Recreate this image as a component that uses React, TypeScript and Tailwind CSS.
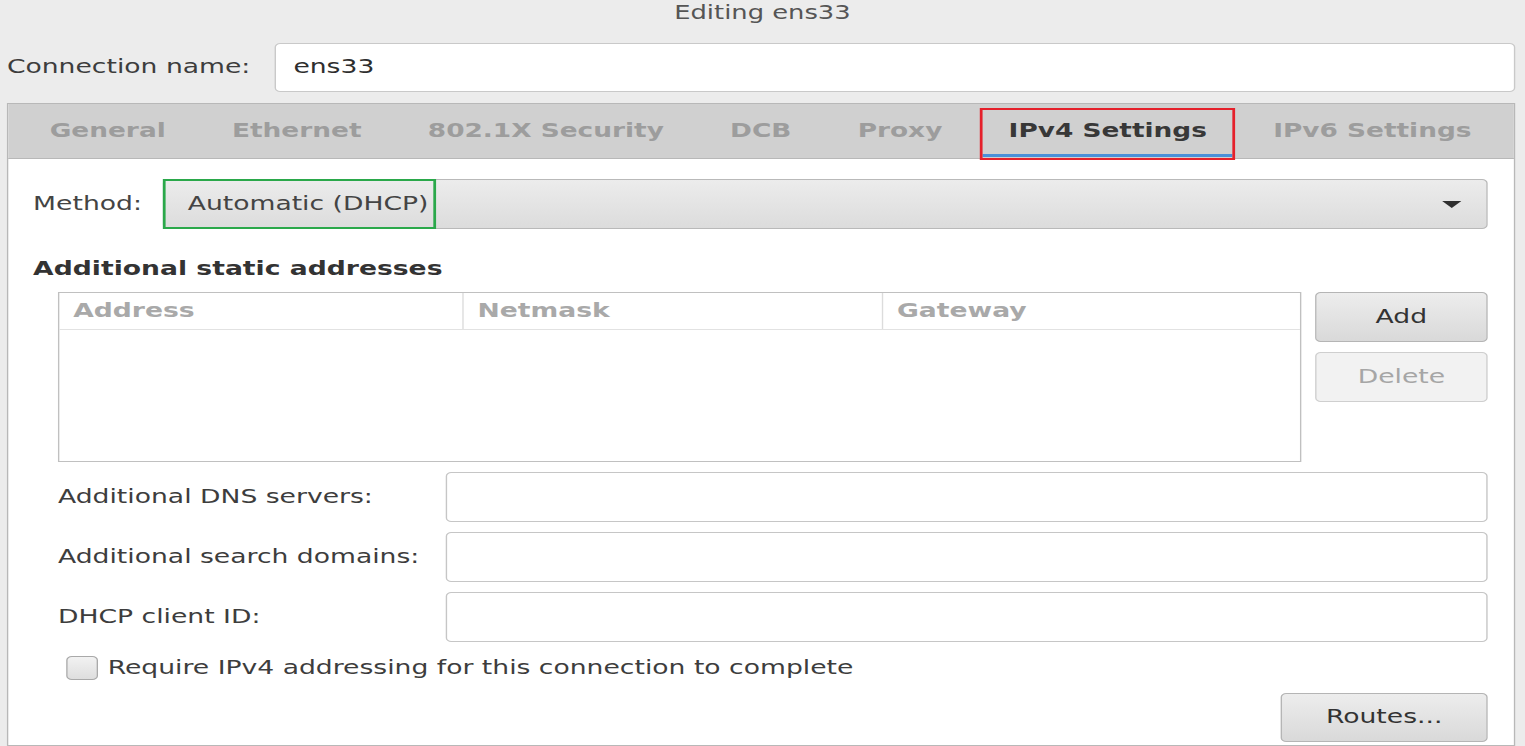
import React from "react";

const tabs = ["General", "Ethernet", "802.1X Security", "DCB", "Proxy", "IPv4 Settings", "IPv6 Settings"];

function Field({ label }: { label: string }) {
  return (
    <div className="flex items-center">
      <div className="w-[281px] text-[#3d3d3d]">{label}</div>
      <div className="flex-1 h-[50px] bg-white border border-[#c6c6c6] rounded-[4px]" />
    </div>
  );
}

export default function App() {
  return (
    <div className="w-[1525px] h-[746px] overflow-hidden bg-[#ececec]">
      <div className="w-[1105px] h-[746px] origin-top-left scale-x-[1.38] flex flex-col font-['DejaVu_Sans',sans-serif] text-[19.3px] text-[#3d3d3d]">
        <div className="h-[27px] flex items-center justify-center text-[18.7px] text-[#555555]">Editing ens33</div>

        <div className="mt-[16px] flex items-center pl-[5px] pr-[7px]">
          <div className="w-[193.6px]">Connection name:</div>
          <div className="flex-1 h-[49px] bg-white border border-[#c9c9c9] rounded-[4px] flex items-center pl-[13px] text-[#2e2e2e]">
            ens33
          </div>
        </div>

        <div className="mt-[11px] ml-[5px] mr-[7px] flex-1 flex flex-col border border-[#b8b8b8] bg-white">
          <div className="h-[55px] shrink-0 bg-[#d0d0d0] border-b border-[#b8b8b8] flex pl-[6px] text-[19.12px]">
            {tabs.map((t) => {
              const active = t === "IPv4 Settings";
              return (
                <div
                  key={t}
                  className={
                    active
                      ? "relative px-[24px] h-full flex items-center font-bold text-[#383838]"
                      : "relative px-[24px] h-full flex items-center font-bold text-[#9d9d9d]"
                  }
                >
                  {t}
                  {active && (
                    <>
                      <div className="absolute left-[5px] right-[6px] bottom-[1px] h-[3px] bg-[#4a90d9]" />
                      <div className="absolute left-[3px] right-[4px] top-[4px] bottom-[-2px] border-2 border-[#e5202b]" />
                    </>
                  )}
                </div>
              );
            })}
          </div>

          <div className="flex-1 flex flex-col pl-[18px] pr-[19px] pt-[20px]">
            <div className="flex items-center">
              <div className="w-[94px] text-[#444444]">Method:</div>
              <div className="relative flex-1 h-[50px] rounded-[4px] border border-[#b9b9b9] bg-gradient-to-b from-[#ececec] to-[#dcdcdc] flex items-center pl-[17px] pr-[18px] text-[#444444]">
                <span className="flex-1">Automatic (DHCP)</span>
                <svg width="14" height="7" viewBox="0 0 14 7">
                  <path d="M0 0 L14 0 L7 7 Z" fill="#2f2f2f" />
                </svg>
                <div className="absolute left-[-1px] top-[-1px] w-[198px] h-[50px] border-2 border-[#2aa84a]" />
              </div>
            </div>

            <div className="mt-[29px] h-[22px] leading-[22px] font-bold text-[#333333]">Additional static addresses</div>

            <div className="mt-[12px] pl-[18px] flex gap-[10px]">
              <div className="flex-1 h-[170px] border border-[#c0c0c0] bg-white flex flex-col">
                <div className="h-[37px] flex border-b border-[#e2e2e2] font-bold text-[#a9a9a9]">
                  <div className="w-[293px] border-r border-[#dcdcdc] pl-[10px] flex items-center">Address</div>
                  <div className="w-[304px] border-r border-[#dcdcdc] pl-[10px] flex items-center">Netmask</div>
                  <div className="flex-1 pl-[10px] flex items-center">Gateway</div>
                </div>
              </div>
              <div className="w-[125px] flex flex-col gap-[10px]">
                <div className="h-[50px] rounded-[4px] border border-[#b5b5b5] bg-gradient-to-b from-[#ededed] to-[#d9d9d9] flex items-center justify-center text-[#333333]">
                  Add
                </div>
                <div className="h-[50px] rounded-[4px] border border-[#cfcfcf] bg-[#f2f2f2] flex items-center justify-center text-[#a6a6a6]">
                  Delete
                </div>
              </div>
            </div>

            <div className="mt-[10px] pl-[18px] flex flex-col gap-[10px]">
              <Field label="Additional DNS servers:" />
              <Field label="Additional search domains:" />
              <Field label="DHCP client ID:" />
            </div>

            <div className="mt-[12px] pl-[24px] flex items-center gap-[7px]">
              <div className="w-[23px] h-[24px] rounded-[4px] border border-[#a9a9a9] bg-gradient-to-b from-[#f2f2f2] to-[#dedede]" />
              <span className="text-[#3d3d3d]">Require IPv4 addressing for this connection to complete</span>
            </div>

            <div className="mt-[10px] self-end w-[150px] h-[49px] rounded-[4px] border border-[#b5b5b5] bg-gradient-to-b from-[#ededed] to-[#d9d9d9] flex items-center justify-center text-[#333333]">
              Routes...
            </div>
          </div>
        </div>
      </div>
    </div>
  );
}
